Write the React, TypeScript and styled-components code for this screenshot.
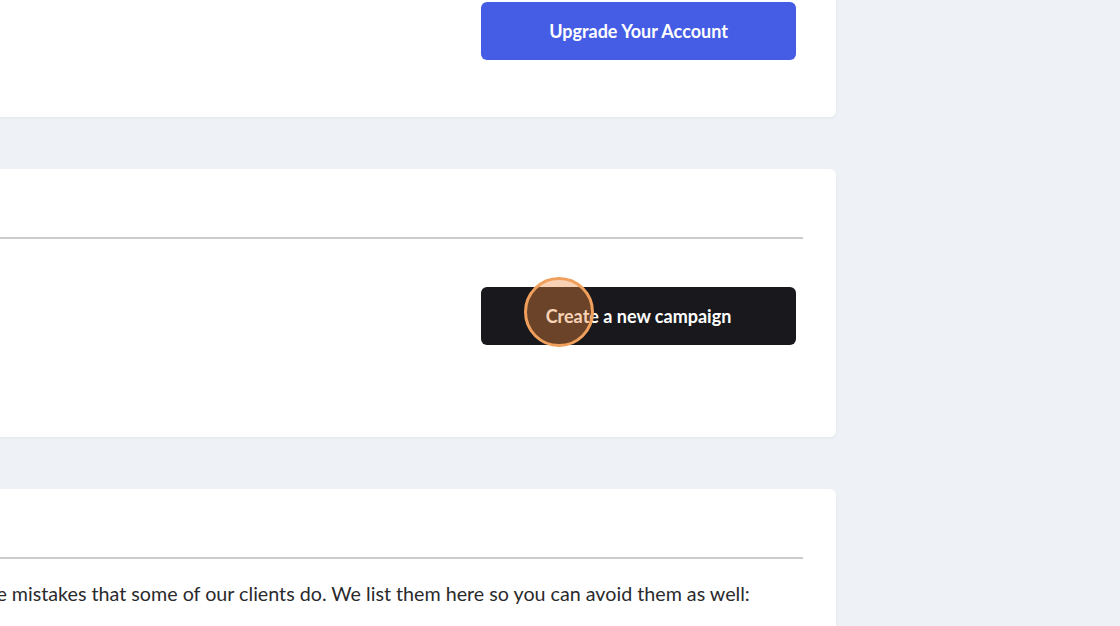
import React, { FunctionComponent } from 'react';
import styled, { createGlobalStyle } from 'styled-components';

const GlobalStyle = createGlobalStyle`
  html, body {
    margin: 0;
    padding: 0;
    background: #eef1f5;
    font-family: Lato, "Open Sans", sans-serif;
  }
`;

const App: FunctionComponent = () => (
  <>
    <GlobalStyle />
    <Page>
      <Main>
        <Card>
          <ButtonRow $top={42} $bottom={57}>
            <Button $variant="blue">Upgrade Your Account</Button>
          </ButtonRow>
        </Card>

        <Card>
          <CardHeader />
          <ButtonRow $top={48} $bottom={92}>
            <Button $variant="dark">
              Create a new campaign
              <ClickMarker />
            </Button>
          </ButtonRow>
        </Card>

        <Card>
          <CardHeader />
          <Body>
            Here you&apos;ll find some of the mistakes that some of our clients do. We list them here so you can avoid them as well:
          </Body>
        </Card>
      </Main>
    </Page>
  </>
);

const Page = styled.div`
  height: 626px;
  overflow: hidden;
`;

const Main = styled.main`
  display: flex;
  flex-direction: column;
  gap: 52px;
  width: 1100px;
  margin: -40px 0 0 -264px;
`;

const Card = styled.section`
  background: #ffffff;
  border-radius: 6px;
  box-shadow: 0 1px 3px rgba(40, 60, 90, 0.06);
  padding: 0 33px;
`;

const CardHeader = styled.header`
  height: 68px;
  border-bottom: 2px solid #cacbcd;
`;

const ButtonRow = styled.div<{ $top: number; $bottom: number }>`
  display: flex;
  justify-content: flex-end;
  padding: ${({ $top }) => $top}px 7px ${({ $bottom }) => $bottom}px 0;
`;

const Button = styled.button<{ $variant: 'blue' | 'dark' }>`
  position: relative;
  width: 315px;
  height: 58px;
  border: none;
  border-radius: 6px;
  background: ${({ $variant }) => ($variant === 'blue' ? '#445de4' : '#19191d')};
  color: #ffffff;
  font-family: Lato, "Open Sans", sans-serif;
  font-size: 18px;
  font-weight: 700;
  cursor: pointer;
`;

const ClickMarker = styled.span`
  position: absolute;
  left: 43px;
  top: -10px;
  width: 64px;
  height: 64px;
  border-radius: 50%;
  border: 3px solid #f0a05c;
  background: rgba(240, 138, 60, 0.38);
  pointer-events: none;
`;

const Body = styled.p`
  margin: 0;
  padding: 22px 0 40px;
  font-size: 19.7px;
  line-height: 26px;
  color: #2a2a2c;
  white-space: nowrap;
`;

export default App;
